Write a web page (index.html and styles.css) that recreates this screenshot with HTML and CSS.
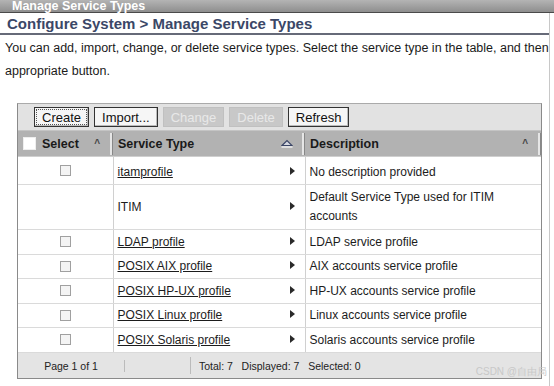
FILE: index.html
```html
<!DOCTYPE html>
<html lang="en">
<head>
    <meta charset="UTF-8">
    <title>Manage Service Types</title>
    <link rel="stylesheet" href="styles.css">
</head>
<body>
    <div class="titlebar">Manage Service Types</div>
    <div class="page">
        <h1 class="heading">Configure System &gt; Manage Service Types</h1>
        <p class="intro">You can add, import, change, or delete service types. Select the service type in the table, and then<br>appropriate button.</p>
        <div class="grid">
            <div class="toolbar">
                <button class="btn focus">Create</button>
                <button class="btn">Import...</button>
                <button class="btn" disabled>Change</button>
                <button class="btn" disabled>Delete</button>
                <button class="btn">Refresh</button>
            </div>
            <table>
                <colgroup>
                    <col class="c-select">
                    <col class="c-type">
                    <col class="c-desc">
                </colgroup>
                <thead>
                    <tr>
                        <th><div class="hcell"><span class="box white"></span><span class="hlabel">Select</span><span class="caret">^</span><span class="grip"></span></div></th>
                        <th><div class="hcell"><span class="hlabel">Service Type</span>
                            <svg class="sorted" width="12" height="9" viewBox="0 0 12 9"><polygon points="1,6.5 6,1.5 11,6.5" fill="#d4d7e0" stroke="#3a4566" stroke-width="1.2"/><line x1="0.5" y1="8" x2="11.5" y2="8" stroke="#eee" stroke-width="1.5"/></svg>
                            <span class="grip"></span></div></th>
                        <th><div class="hcell"><span class="hlabel">Description</span><span class="caret">^</span><span class="grip"></span></div></th>
                    </tr>
                </thead>
                <tbody>
                    <tr class="first">
                        <td class="sel"><span class="box"></span></td>
                        <td><div class="tcell"><a href="#">itamprofile</a><span class="tri"></span></div></td>
                        <td>No description provided</td>
                    </tr>
                    <tr class="tall">
                        <td class="sel"></td>
                        <td><div class="tcell"><span>ITIM</span><span class="tri"></span></div></td>
                        <td>Default Service Type used for ITIM accounts</td>
                    </tr>
                    <tr>
                        <td class="sel"><span class="box"></span></td>
                        <td><div class="tcell"><a href="#">LDAP profile</a><span class="tri"></span></div></td>
                        <td>LDAP service profile</td>
                    </tr>
                    <tr>
                        <td class="sel"><span class="box"></span></td>
                        <td><div class="tcell"><a href="#">POSIX AIX profile</a><span class="tri"></span></div></td>
                        <td>AIX accounts service profile</td>
                    </tr>
                    <tr>
                        <td class="sel"><span class="box"></span></td>
                        <td><div class="tcell"><a href="#">POSIX HP-UX profile</a><span class="tri"></span></div></td>
                        <td>HP-UX accounts service profile</td>
                    </tr>
                    <tr>
                        <td class="sel"><span class="box"></span></td>
                        <td><div class="tcell"><a href="#">POSIX Linux profile</a><span class="tri"></span></div></td>
                        <td>Linux accounts service profile</td>
                    </tr>
                    <tr>
                        <td class="sel"><span class="box"></span></td>
                        <td><div class="tcell"><a href="#">POSIX Solaris profile</a><span class="tri"></span></div></td>
                        <td>Solaris accounts service profile</td>
                    </tr>
                </tbody>
            </table>
            <div class="footer">
                <div class="pages">Page 1 of 1</div>
                <div class="blank"></div>
                <div class="totals">Total: 7&nbsp;&nbsp; Displayed: 7&nbsp;&nbsp; Selected: 0</div>
            </div>
        </div>
        <div class="mark">CSDN @自由局</div>
    </div>
</body>
</html>
```

FILE: styles.css
```css
body {
    margin: 0;
    font-family: "Liberation Sans", Arial, sans-serif;
    font-size: 12px;
    color: #222;
    background: #fff;
}
.titlebar {
    height: 12px;
    line-height: 12px;
    padding-left: 12px;
    font-size: 12.5px;
    font-weight: bold;
    color: #fff;
    background: linear-gradient(#b4b4b4, #8e8e8e);
    border-bottom: 1px solid #4a4a4a;
}
.page {
    width: 549px;
    border-right: 1px solid #c8c8c8;
    height: 373px;
}
.heading {
    margin: 0;
    padding: 1px 7px 0;
    height: 19px;
    font-size: 15px;
    line-height: 19px;
    color: #3b4767;
    border-bottom: 2px solid #666a78;
}
.intro {
    margin: 2px -10px 0 5px;
    line-height: 23px;
    font-size: 12.5px;
    white-space: nowrap;
    color: #1a1a1a;
}
.grid {
    margin: 20px 0 0 17px;
    width: 523px;
    border: 1px solid #8a8a8a;
    border-top-color: #aaa;
}
.toolbar {
    display: flex;
    gap: 5px;
    padding: 3px 0 3px 16px;
    background: #e2e2e2;
    border-bottom: 1px solid #c4c4c4;
}
.btn {
    height: 20px;
    padding: 0 7px;
    font-family: "Liberation Sans", Arial, sans-serif;
    font-size: 13px;
    color: #111;
    background: #f6f6f6;
    border: 1px solid #333;
    box-shadow: inset -1px -1px 0 #bbb;
}
.btn.focus {
    outline: 1px dotted #555;
    outline-offset: -3px;
}
.btn:disabled {
    color: #e8e8e8;
    background: #c8c8c8;
    border-color: #c0c0c0;
    box-shadow: none;
}
table {
    width: 100%;
    border-collapse: collapse;
    table-layout: fixed;
}
.c-select { width: 95px; }
.c-type { width: 192px; }
th {
    height: 25px;
    padding: 0;
    background: #b2b2b2;
    text-align: left;
    border-bottom: 1px solid #cfcfcf;
}
.hcell {
    display: flex;
    align-items: center;
    height: 25px;
    padding-left: 5px;
    gap: 6px;
}
.hlabel {
    flex: 1;
    font-weight: bold;
    font-size: 12.5px;
    color: #1a1a1a;
}
.caret {
    font-size: 10px;
    color: #444;
    margin-right: 4px;
}
.sorted {
    margin-right: 3px;
}
.grip {
    width: 2px;
    height: 22px;
    background: #e6e6e6;
    border-right: 1px solid #888;
}
.box {
    display: inline-block;
    width: 11px;
    height: 11px;
    border: 1px solid #a0a0a0;
    background: #f4f4f4;
    box-sizing: border-box;
}
.box.white {
    width: 13px;
    height: 13px;
    background: #fff;
    border-color: #eee;
}
td {
    padding: 0 4px;
    border-bottom: 1px solid #dadada;
    border-left: 1px solid #d0d0d0;
    font-size: 12px;
    line-height: 19px;
    color: #1c1c1c;
    vertical-align: middle;
}
td.sel {
    border-left: none;
    text-align: center;
    vertical-align: top;
    padding-top: 4px;
    height: 20px;
}
tr:nth-child(even) td.sel {
    height: 19px;
}
tr.first td {
    padding-top: 3px;
}
tr.first td.sel {
    padding-top: 6px;
    height: 21px;
}
tr.tall td.sel {
    height: 40px;
}
.tcell {
    display: flex;
    align-items: center;
}
.tcell > :first-child {
    flex: 1;
}
a {
    color: #1c1c1c;
}
.tri {
    width: 0;
    height: 0;
    margin: 0 6px 3px 0;
    border-left: 5px solid #2a2a2a;
    border-top: 4px solid transparent;
    border-bottom: 4px solid transparent;
}
.footer {
    display: flex;
    height: 25px;
    align-items: center;
    background: #e4e4e4;
    font-size: 10.5px;
    color: #222;
}
.pages {
    width: 106px;
    text-align: center;
    border-right: 1px solid #bbb;
}
.blank {
    width: 65px;
    height: 17px;
    border-right: 1px solid #bbb;
}
.totals {
    padding-left: 8px;
}
.mark {
    text-align: right;
    padding-right: 2px;
    margin-top: -14px;
    font-size: 10px;
    color: #c8c8c8;
}
```
